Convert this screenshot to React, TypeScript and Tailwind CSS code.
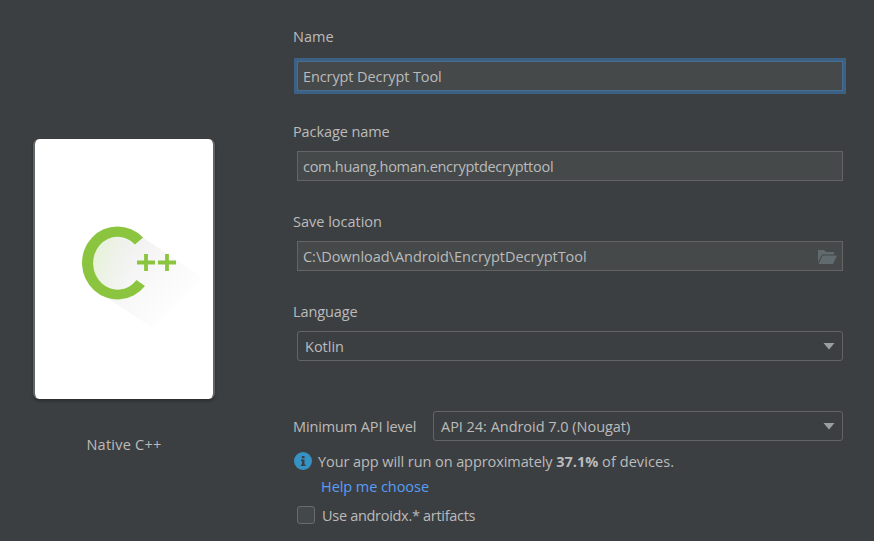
import React from "react";

function Label({ children, className }: { children: React.ReactNode; className: string }) {
  return <div className={`h-5 leading-5 whitespace-nowrap ${className}`}>{children}</div>;
}

function Arrow() {
  return (
    <svg width="12" height="7" viewBox="0 0 12 7" className="mr-[7px] shrink-0">
      <path d="M0.500 0H11.500L6 6.500Z" fill="#9b9fa2" />
    </svg>
  );
}

export default function App() {
  return (
    <div className="flex h-[541px] w-[874px] overflow-hidden border-b border-[#3b3e46] bg-[#3c3f41] font-['Open_Sans','Noto_Sans',sans-serif] text-[14.5px] text-[#bbbbbb]">
      <section className="flex w-[248px] shrink-0 flex-col items-center pt-[139px]">
        <div className="h-[260px] w-[182px] rounded-[6px] border-x-2 border-[#626466] bg-white shadow-[0_2px_3px_rgba(0,0,0,0.3)]">
          <svg width="178" height="260" viewBox="35 139 178 260">
            <defs>
              <linearGradient id="shade" x1="95" y1="240" x2="172" y2="313" gradientUnits="userSpaceOnUse">
                <stop offset="0" stopColor="#ebebeb" />
                <stop offset="0.5" stopColor="#f6f6f6" />
                <stop offset="1" stopColor="#fefefe" />
              </linearGradient>
              <linearGradient id="tint" x1="94" y1="255" x2="140" y2="267" gradientUnits="userSpaceOnUse">
                <stop offset="0" stopColor="#e6f3d6" />
                <stop offset="1" stopColor="#f4f4f4" stopOpacity="0" />
              </linearGradient>
            </defs>
            <path d="M142 237L203 278L154 329L107 298L90 262L105 235Z" fill="url(#shade)" />
            <ellipse cx="118.500" cy="263" rx="27" ry="28" fill="url(#tint)" />
            <path d="M143 237.500A35.500 36.500 0 1 0 145 286L136.500 280A24.500 26.500 0 1 1 135 244.500Z" fill="#8bc540" />
            <path d="M137 262.500H155M146 254V271M158 262.500H176M167 254V271" stroke="#8bc540" strokeWidth="3.800" />
          </svg>
        </div>
        <Label className="mt-[36px] tracking-[0.25px]">Native C++</Label>
      </section>
      <main className="ml-[45px] flex w-[550px] shrink-0 flex-col pt-[27px]">
        <Label className="">Name</Label>
        <div className="mt-[14px] ml-1 flex h-[30px] items-center border border-[#466d94] bg-[#45494a] pt-[2px] pl-[5px] ring-3 ring-[#3d6185]">
          <span className="leading-5 tracking-[-0.1px]">Encrypt Decrypt Tool</span>
        </div>
        <Label className="mt-[31px] tracking-[-0.1px]">Package name</Label>
        <div className="mt-[9px] ml-1 flex h-[30px] items-center border border-[#646464] bg-[#45494a] pt-[2px] pl-[5px]">
          <span className="leading-5 tracking-[-0.28px]">com.huang.homan.encryptdecrypttool</span>
        </div>
        <Label className="mt-[31px]">Save location</Label>
        <div className="mt-[9px] ml-1 flex h-[30px] items-center justify-between border border-[#646464] bg-[#45494a] pt-[2px] pl-[5px]">
          <span className="leading-5 tracking-[-0.03px]">C:\Download\Android\EncryptDecryptTool</span>
          <svg width="19" height="14" viewBox="0 0 19 14" className="mr-[5px] mb-px">
            <path d="M0 0H6L8 2H16V4.500H4L0 12Z" fill="#616a6e" />
            <path d="M4.500 5.600H19L15 14H0.500Z" fill="#616a6e" />
          </svg>
        </div>
        <Label className="mt-[31px] tracking-[-0.1px]">Language</Label>
        <div className="mt-[9px] ml-1 flex h-[30px] items-center justify-between rounded-[3px] border border-[#646464] pl-[7px]">
          <span className="pt-[2px] leading-5">Kotlin</span>
          <Arrow />
        </div>
        <div className="mt-[50px] flex h-[30px] items-center">
          <Label className="mt-[2px] w-[140px] tracking-[-0.12px]">Minimum API level</Label>
          <div className="flex h-[30px] w-[410px] items-center justify-between rounded-[3px] border border-[#646464] pl-[7px]">
            <span className="pt-[2px] leading-5 tracking-[-0.03px]">API 24: Android 7.0 (Nougat)</span>
            <Arrow />
          </div>
        </div>
        <div className="mt-[11px] flex h-5 items-center">
          <svg width="18" height="18" viewBox="0 0 18 18" className="mr-[6px] mb-[2px] ml-px shrink-0">
            <circle cx="9" cy="9" r="9" fill="#3592c4" />
            <path d="M7.800 4H10.500V6.200H7.800ZM7 7.500H10.500V12.500H11.500V14H7V12.500H8V9H7Z" fill="#3c3f41" />
          </svg>
          <Label className="">
            <span className="tracking-[-0.08px]">Your app will run on approximately </span>
            <b>37.1%</b> <span className="tracking-[0.08px]">of devices.</span>
          </Label>
        </div>
        <Label className="mt-[5px] ml-7 tracking-[-0.06px] text-[#589df6]">Help me choose</Label>
        <div className="mt-[9px] flex h-5 items-center">
          <span className="mr-[7px] mb-[2px] ml-[3.5px] h-[18px] w-[18.5px] rounded-[3px] border border-[#6b6b6b] bg-[#43494a]" />
          <Label className="tracking-[-0.3px]">Use androidx.* artifacts</Label>
        </div>
      </main>
    </div>
  );
}
